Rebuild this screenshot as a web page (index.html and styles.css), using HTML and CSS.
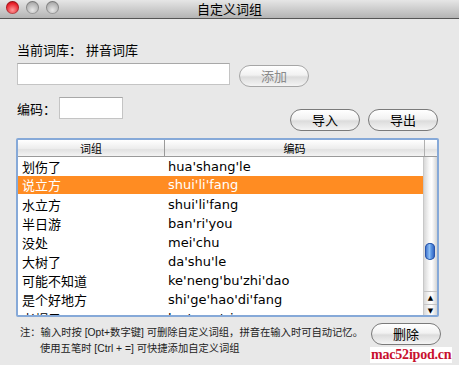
FILE: index.html
```html
<!DOCTYPE html>
<html lang="zh-CN">
<head>
    <meta charset="UTF-8">
    <title>自定义词组</title>
    <link rel="stylesheet" href="styles.css">
</head>
<body>
    <div class="window">
        <div class="titlebar">
            <div class="lights">
                <span class="light red"></span>
                <span class="light"></span>
                <span class="light"></span>
            </div>
            <div class="title">自定义词组</div>
        </div>

        <div class="content">
            <div class="current">当前词库：<span class="lib">拼音词库</span></div>

            <div class="add-row">
                <input class="field word-field" type="text">
                <button class="button disabled">添加</button>
            </div>

            <div class="code-row">
                <div class="code-left">
                    <span class="label">编码：</span>
                    <input class="field code-field" type="text">
                </div>
                <div class="io-buttons">
                    <button class="button">导入</button>
                    <button class="button">导出</button>
                </div>
            </div>

            <div class="table">
                <div class="table-head">
                    <div class="th col-word">词组</div>
                    <div class="th col-code">编码</div>
                    <div class="th corner"></div>
                </div>
                <div class="table-body">
                    <div class="rows" id="rows"></div>
                    <div class="scrollbar">
                        <div class="track">
                            <div class="thumb"></div>
                        </div>
                        <div class="arrow">▲</div>
                        <div class="arrow">▼</div>
                    </div>
                </div>
            </div>

            <div class="bottom">
                <div class="note">
                    <p>注：输入时按 [Opt+数字键] 可删除自定义词组，拼音在输入时可自动记忆。</p>
                    <p class="indent">使用五笔时 [Ctrl + =] 可快捷添加自定义词组</p>
                </div>
                <button class="button">删除</button>
            </div>
        </div>

        <div class="watermark">mac52ipod.cn</div>
    </div>

    <script>
        const words = [
            ["划伤了", "hua'shang'le"],
            ["说立方", "shui'li'fang"],
            ["水立方", "shui'li'fang"],
            ["半日游", "ban'ri'you"],
            ["没处", "mei'chu"],
            ["大树了", "da'shu'le"],
            ["可能不知道", "ke'neng'bu'zhi'dao"],
            ["是个好地方", "shi'ge'hao'di'fang"],
            ["老帽子", "lao'mao'zi"]
        ];

        const rows = document.getElementById("rows");
        words.forEach((w, i) => {
            const row = document.createElement("div");
            row.classList.add("row");
            if (i === 1) row.classList.add("selected");
            row.innerHTML = `<span class="col-word">${w[0]}</span><span class="col-code">${w[1]}</span>`;
            rows.appendChild(row);
        });
    </script>
</body>
</html>
```

FILE: styles.css
```css
body {
    margin: 0;
    font-family: "DejaVu Sans", "Noto Sans CJK SC", sans-serif;
    font-size: 13px;
    color: #000;
    background: #e8e8e8;
}

.window {
    position: relative;
    width: 459px;
    height: 365px;
    overflow: hidden;
    background: #e8e8e8;
}

.titlebar {
    position: relative;
    height: 18px;
    background: linear-gradient(#e6e6e6, #b4b4b4);
    border-bottom: 1px solid #555;
    display: flex;
    align-items: center;
    justify-content: center;
}

.lights {
    position: absolute;
    left: 6px;
    top: 1px;
    display: flex;
    gap: 7px;
}

.light {
    width: 13px;
    height: 13px;
    border-radius: 50%;
    background: radial-gradient(circle at 50% 70%, #e8e8e8, #a9a9a9 70%, #8a8a8a);
    box-shadow: inset 0 0 0 1px rgba(0, 0, 0, 0.25);
}

.light.red {
    background: radial-gradient(circle at 50% 70%, #ff9a9a, #e8202a 60%, #9c0b12);
}

.title {
    font-family: "Noto Sans CJK SC", sans-serif;
    font-size: 13px;
    line-height: 18px;
}

.content {
    padding: 21px 0 0 17px;
}

.current {
    font-family: "Noto Sans CJK SC", sans-serif;
    line-height: 20px;
}

.lib {
    margin-left: 4px;
}

.add-row {
    display: flex;
    align-items: flex-start;
    margin-top: 3px;
}

.field {
    box-sizing: border-box;
    border: 1px solid #c4c4c4;
    border-top-color: #a8a8a8;
    background: #fff;
    margin: 0;
    padding: 0;
    font: inherit;
}

.word-field {
    width: 213px;
    height: 22px;
}

.button {
    box-sizing: border-box;
    width: 70px;
    height: 22px;
    border: 1px solid #7a7a7a;
    border-radius: 11px;
    background: linear-gradient(#ffffff, #f2f2f2 45%, #dcdcdc 55%, #f4f4f4);
    font-family: "Noto Sans CJK SC", sans-serif;
    font-size: 13px;
    color: #000;
    padding: 0;
    line-height: 18px;
}

.add-row .button {
    margin: 2px 0 0 9px;
}

.button.disabled {
    color: #8a8a8a;
    border-color: #a6a6a6;
}

.code-row {
    display: flex;
    align-items: flex-start;
    margin-top: 10px;
}

.code-left {
    display: flex;
    align-items: center;
}

.label {
    font-family: "Noto Sans CJK SC", sans-serif;
    width: 42px;
}

.code-field {
    width: 64px;
    height: 22px;
}

.io-buttons {
    display: flex;
    gap: 8px;
    margin: 12px 0 0 167px;
}

.table {
    box-sizing: border-box;
    width: 423px;
    height: 179px;
    margin-top: 7px;
    margin-left: -1px;
    border: 2px solid #86a9d8;
    border-radius: 2px;
    background: #fff;
    overflow: hidden;
}

.table-head {
    display: flex;
    height: 16px;
    border-bottom: 1px solid #9a9a9a;
    background: linear-gradient(#ffffff, #ececec 55%, #e2e2e2 60%, #f4f4f4);
    font-family: "Noto Sans CJK SC", sans-serif;
    font-size: 11px;
    line-height: 16px;
}

.th {
    text-align: center;
}

.table-head .col-word {
    width: 146px;
    border-right: 1px solid #9a9a9a;
}

.table-head .col-code {
    width: 259px;
    border-right: 1px solid #b0b0b0;
}

.table-head .corner {
    flex: 1;
}

.table-body {
    display: flex;
    height: 160px;
}

.rows {
    flex: 1;
}

.row {
    display: flex;
    height: 19px;
    line-height: 19px;
}

.row .col-word {
    width: 143px;
    padding-left: 4px;
    font-family: "Noto Sans CJK SC", sans-serif;
}

.row .col-code {
    padding-left: 3px;
}

.row.selected {
    background: #ff8c22;
    color: #fff;
    height: 18px;
    margin-bottom: 1px;
    line-height: 18px;
}

.scrollbar {
    width: 13px;
    display: flex;
    flex-direction: column;
    background: linear-gradient(90deg, #d8d8d8, #f8f8f8 40%, #ffffff 60%, #d4d4d4);
    border-left: 1px solid #c8c8c8;
}

.track {
    flex: 1;
    position: relative;
    border-radius: 6px;
}

.thumb {
    position: absolute;
    left: 1px;
    top: 86px;
    width: 10px;
    height: 17px;
    border-radius: 5px;
    background: linear-gradient(90deg, #2f63c5, #8ec0f6 45%, #5d99e6 60%, #2856b8);
    box-shadow: inset 0 0 0 1px #2a55a8;
}

.arrow {
    height: 12px;
    font-size: 7px;
    line-height: 12px;
    text-align: center;
    color: #000;
    border-top: 1px solid #c4c4c4;
}

.bottom {
    display: flex;
    align-items: flex-start;
    margin-top: 8px;
}

.note {
    font-family: "Liberation Sans", "Noto Sans CJK SC", sans-serif;
    font-size: 10.3px;
    color: #222;
    width: 351px;
    margin-left: 3px;
}

.note p {
    margin: 0;
    line-height: 16px;
    white-space: nowrap;
}

.note .indent {
    padding-left: 20px;
}

.bottom .button {
    margin-top: -2px;
}

.watermark {
    position: absolute;
    left: 370px;
    top: 347px;
    font-family: "Liberation Serif", serif;
    font-weight: bold;
    font-size: 14px;
    letter-spacing: -0.2px;
    color: #c8102e;
    background: #fff;
    padding: 0 1px;
    line-height: 16px;
}
```
